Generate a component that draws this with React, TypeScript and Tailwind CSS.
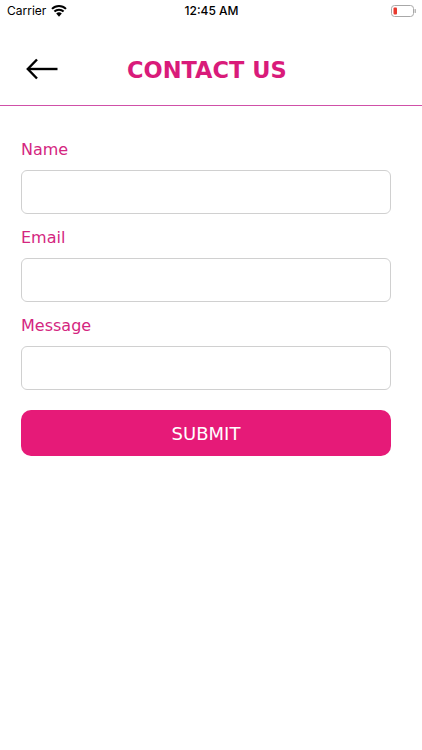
export default function App() {
  const fields = ['Name', 'Email', 'Message'];
  return (
    <div className="w-[422px] h-[750px] bg-white overflow-hidden font-['DejaVu_Sans',sans-serif]">
      {/* status bar */}
      <div className="h-[22px] flex items-center justify-between pl-[7px] pr-[6px] text-black font-['Inter',sans-serif]">
        <div className="flex items-center gap-[5px] w-[120px]">
          <span className="text-[12px]">Carrier</span>
          <svg width="16" height="12" viewBox="0 0 16 12">
            <path d="M8 11.8 L5.2 8.5 A4 4 0 0 1 10.8 8.5 Z" fill="#000" />
            <path d="M3.4 6.5 A6.6 6.6 0 0 1 12.6 6.5" stroke="#000" strokeWidth="2" fill="none" />
            <path d="M1 3.9 A10 10 0 0 1 15 3.9" stroke="#000" strokeWidth="2" fill="none" />
          </svg>
        </div>
        <span className="text-[12px] font-medium">12:45 AM</span>
        <div className="w-[120px] flex justify-end">
          <svg width="25" height="12" viewBox="0 0 25 12">
            <rect x="0.5" y="0.5" width="22" height="11" rx="3" fill="none" stroke="#a8a8a8" />
            <rect x="2.5" y="2.5" width="3.5" height="7" rx="1" fill="#e8392e" />
            <rect x="23.6" y="4" width="1.2" height="4" rx="0.6" fill="#a8a8a8" />
          </svg>
        </div>
      </div>
      {/* header */}
      <div className="h-[83px] flex items-center pl-[26px] pt-[10px]">
        <svg width="33" height="22" viewBox="0 0 33 22" fill="none" stroke="#000" strokeWidth="2.4">
          <path d="M31.5 11 H2" />
          <path d="M11 1.5 L1.8 11 L11 20.5" />
        </svg>
        <h1 className="ml-[68px] mt-[3px] text-[22.5px] font-bold text-[#d91b7a] leading-none">CONTACT US</h1>
      </div>
      <div className="h-px bg-[#d050a8]" />
      {/* form */}
      <div className="px-[21px] pt-[32px] flex flex-col">
        {fields.map((f) => (
          <div key={f} className="flex flex-col">
            <label className="text-[16px] leading-[23px] text-[#d4267f] h-[32px]">{f}</label>
            <input className="w-[370px] h-[44px] rounded-[6px] border border-[#d0d0d0] bg-white mb-[12px]" />
          </div>
        ))}
        <button className="mt-[8px] w-[370px] h-[46px] rounded-[10px] bg-[#e61a78] text-white text-[18px] pt-[1px]">SUBMIT</button>
      </div>
    </div>
  );
}
